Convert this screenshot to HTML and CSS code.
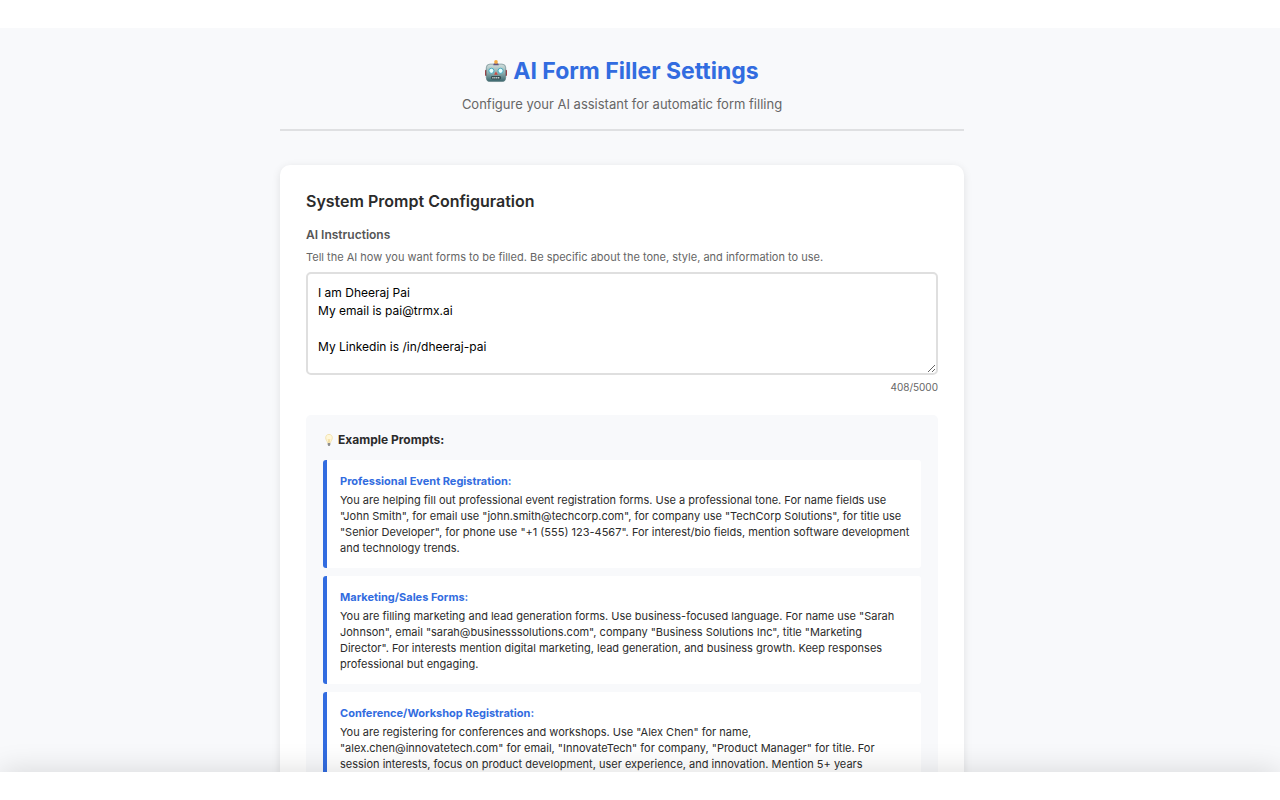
FILE: index.html
```html
<!DOCTYPE html>
<html lang="en">
<head>
<meta charset="utf-8">
<meta name="viewport" content="width=device-width, initial-scale=1">
<title>AI Form Filler Settings</title>
<link rel="stylesheet" href="styles.css">
</head>
<body>
<main class="page">
  <div class="container">
    <header class="header">
      <h1 class="title">
        <svg class="robot" viewBox="0 0 24 24" aria-hidden="true">
          <defs>
            <linearGradient id="face" x1="0" y1="0" x2="0" y2="1">
              <stop offset="0" stop-color="#d3e0df"/>
              <stop offset="0.5" stop-color="#8eaeaf"/>
              <stop offset="1" stop-color="#39656c"/>
            </linearGradient>
          </defs>
          <rect x="0" y="10.5" width="3" height="7" rx="1.2" fill="#a13b3e"/>
          <rect x="21" y="10.5" width="3" height="7" rx="1.2" fill="#a13b3e"/>
          <rect x="1.4" y="4.5" width="21.2" height="19" rx="4" fill="url(#face)" stroke="#5f7e82" stroke-width="0.7"/>
          <path d="M9 5.8Q9 3.4 12 3.4T15 5.8Z" fill="#62527d"/>
          <circle cx="12" cy="2.1" r="2" fill="#f3aa42"/>
          <circle cx="7" cy="11.8" r="2.8" fill="#e9ffff" stroke="#3aa6bd" stroke-width="1"/>
          <circle cx="17" cy="11.8" r="2.8" fill="#e9ffff" stroke="#3aa6bd" stroke-width="1"/>
          <path d="M12 12.5L14 16H10Z" fill="#d0483f"/>
          <rect x="6.5" y="17.5" width="11" height="3.7" rx="1.5" fill="#354d52"/>
          <path d="M8 19.3H16" stroke="#d6dedc" stroke-width="1.5" stroke-dasharray="1.3 0.8"/>
        </svg>
        AI Form Filler Settings
      </h1>
      <p class="subtitle">Configure your AI assistant for automatic form filling</p>
    </header>

    <section class="card">
      <h2 class="card-title">System Prompt Configuration</h2>
      <label class="label" for="prompt">AI Instructions</label>
      <p class="help" id="prompt-help">Tell the AI how you want forms to be filled. Be specific about the tone, style, and information to use.</p>
      <textarea class="prompt" id="prompt" aria-describedby="prompt-help" spellcheck="false">I am Dheeraj Pai
My email is pai@trmx.ai

My Linkedin is /in/dheeraj-pai</textarea>
      <div class="counter">408/5000</div>

      <div class="examples">
        <h3 class="examples-title">
          <svg class="bulb" viewBox="0 0 12 14" aria-hidden="true">
            <path d="M6 1.4C3.8 1.4 2.7 2.9 2.7 4.8C2.7 6.9 4.2 7.8 4.5 9.8H7.5C7.8 7.8 9.3 6.9 9.3 4.8C9.3 2.9 8.2 1.4 6 1.4Z" fill="#fff7d8" stroke="#f0dda2" stroke-width="0.8"/>
            <path d="M5.2 6L5.7 9.3M6.8 6L6.3 9.3" stroke="#e8c46c" stroke-width="0.5" fill="none"/>
            <path d="M4.7 10H7.3V11.8L6.6 12.9H5.4L4.7 11.8Z" fill="#8d8d8d"/>
          </svg>
          Example Prompts:
        </h3>
        <article class="example">
          <h4 class="example-title">Professional Event Registration:</h4>
          <p class="example-text">You are helping fill out professional event registration forms. Use a professional tone. For name fields use "John Smith", for email use "john.smith@techcorp.com", for company use "TechCorp Solutions", for title use "Senior Developer", for phone use "+1 (555) 123-4567". For interest/bio fields, mention software development and technology trends.</p>
        </article>
        <article class="example">
          <h4 class="example-title">Marketing/Sales Forms:</h4>
          <p class="example-text">You are filling marketing and lead generation forms. Use business-focused language. For name use "Sarah Johnson", email "sarah@businesssolutions.com", company "Business Solutions Inc", title "Marketing Director". For interests mention digital marketing, lead generation, and business growth. Keep responses professional but engaging.</p>
        </article>
        <article class="example">
          <h4 class="example-title">Conference/Workshop Registration:</h4>
          <p class="example-text">You are registering for conferences and workshops. Use "Alex Chen" for name, "alex.chen@innovatetech.com" for email, "InnovateTech" for company, "Product Manager" for title. For session interests, focus on product development, user experience, and innovation. Mention 5+ years</p>
        </article>
      </div>
    </section>
  </div>
</main>
<footer class="bottom-bar"></footer>
</body>
</html>
```
FILE: styles.css
```css
* {
  box-sizing: border-box;
}

body {
  display: flex;
  flex-direction: column;
  height: 100vh;
  margin: 0;
  padding-top: 28px;
  overflow: hidden;
  background: #fff;
  color: #2b2b2b;
  font-family: Inter, "Liberation Sans", sans-serif;
}

h1, h2, h3, h4, p {
  margin: 0;
}

.page {
  flex: 1;
  min-height: 0;
  overflow: hidden;
  padding: 26px 52px 0 16px;
  background: #f8f9fb;
}

.container {
  max-width: 684px;
  margin: 0 auto;
}

.header {
  margin-bottom: 34px;
  padding-bottom: 15px;
  border-bottom: 2px solid #dfe0e2;
  text-align: center;
}

.title {
  display: flex;
  align-items: center;
  justify-content: center;
  gap: 6px;
  margin-bottom: 6px;
  color: #326ce0;
  font-size: 23px;
  font-weight: 700;
  line-height: 34px;
}

.robot {
  width: 22px;
  height: 24px;
}

.subtitle {
  color: #666;
  font-size: 13px;
  line-height: 20px;
}

.card {
  padding: 24px 26px;
  border-radius: 10px;
  background: #fff;
  box-shadow: 0 2px 8px rgba(0, 0, 0, 0.1);
}

.card-title {
  margin-bottom: 12px;
  font-size: 16px;
  font-weight: 600;
  line-height: 24px;
}

.label {
  display: block;
  margin-bottom: 4px;
  color: #555;
  font-size: 12px;
  font-weight: 600;
  line-height: 20px;
}

.help {
  margin-bottom: 7px;
  color: #666;
  font-size: 11px;
  line-height: 16px;
}

.prompt {
  display: block;
  width: 100%;
  height: 103px;
  padding: 10px;
  overflow: hidden;
  border: 2px solid #dfdfdf;
  border-radius: 5px;
  background: #fff;
  color: #000;
  font-family: inherit;
  font-size: 12px;
  line-height: 18px;
  resize: vertical;
}

.counter {
  margin: 4px 0 19px;
  color: #666;
  font-size: 10px;
  line-height: 17px;
  text-align: right;
}

.examples {
  display: flex;
  flex-direction: column;
  gap: 8px;
  padding: 15px 17px;
  border-radius: 5px;
  background: #f8f9fb;
}

.examples-title {
  display: flex;
  align-items: center;
  gap: 3px;
  margin-bottom: 2px;
  font-size: 12px;
  font-weight: 700;
  line-height: 20px;
}

.bulb {
  width: 12px;
  height: 14px;
}

.example {
  padding: 13px 9px 12px 13px;
  border-left: 4px solid #326ce0;
  border-radius: 3px;
  background: #fff;
}

.example-title {
  margin-bottom: 3px;
  color: #326ce0;
  font-size: 11px;
  font-weight: 700;
  line-height: 16px;
}

.example-text {
  font-size: 11px;
  line-height: 16px;
}

.bottom-bar {
  position: relative;
  flex: none;
  height: 28px;
  background: #fff;
  box-shadow: 0 0 30px rgba(0, 0, 0, 0.15);
}
```
